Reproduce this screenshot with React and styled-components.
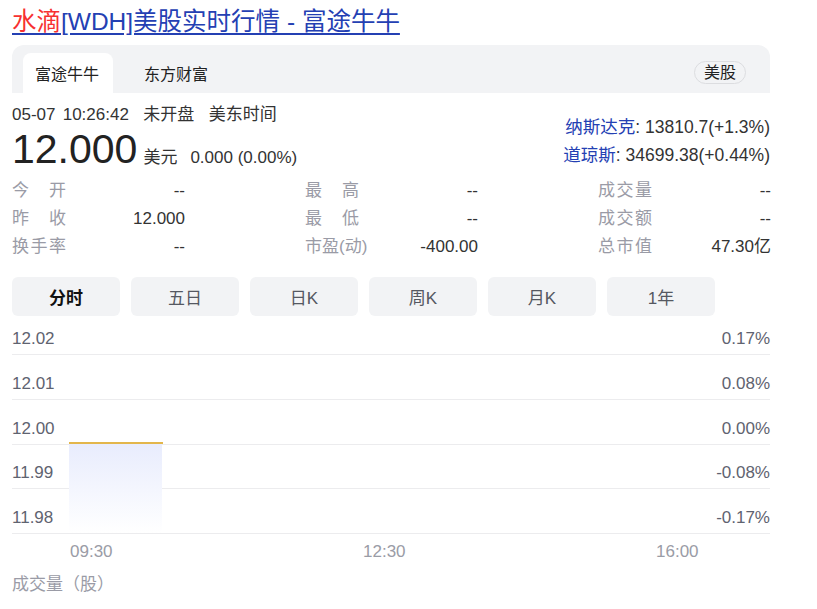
import React from 'react';
import styled, { createGlobalStyle } from 'styled-components';

const GlobalStyle = createGlobalStyle`
  body {
    margin: 0;
    background: #fff;
    font-family: "Liberation Sans", Arial, "Noto Sans CJK SC", sans-serif;
    color: #333;
  }
`;

const Page = styled.div`
  width: 758px;
  padding: 6px 12px 0;
`;

const Title = styled.a`
  display: inline-block;
  font-size: 24.5px;
  line-height: 32px;
  color: #2440b3;
  text-decoration: underline;
  text-underline-offset: 3px;

  & em {
    font-style: normal;
    color: #f73131;
  }
`;

const SourceBar = styled.div`
  margin-top: 7px;
  height: 48px;
  background: #f2f3f5;
  border-radius: 12px 12px 0 0;
  display: flex;
  align-items: flex-end;
  padding: 0 24px 0 11px;
`;

const SourceTab = styled.div`
  height: 40px;
  padding: 0 14px 0 12px;
  margin-right: 19px;
  display: flex;
  align-items: center;
  font-size: 16px;
  color: #222;
  background: ${(p) => (p.$active ? '#fff' : 'transparent')};
  border-radius: 8px 8px 0 0;
`;

const Market = styled.div`
  margin-left: auto;
  align-self: center;
  margin-top: 7px;
  height: 21px;
  line-height: 21px;
  padding: 0 9px;
  border: 1px solid #dcdde0;
  border-radius: 12px;
  font-size: 16px;
  color: #222;
`;

const Header = styled.div`
  display: flex;
  justify-content: space-between;
`;

const Meta = styled.div`
  margin-top: 10px;
  font-size: 17px;
  line-height: 24px;
  color: #333;
  word-spacing: 2.5px;
`;

const PriceRow = styled.div`
  display: flex;
  align-items: baseline;
  height: 44px;
  line-height: 44px;
`;

const Price = styled.span`
  font-size: 41px;
  color: #222;
  margin-right: 6px;
`;

const Change = styled.span`
  font-size: 17px;
  color: #333;
  margin-right: 13px;
`;

const Indexes = styled.div`
  margin-top: 20px;
  text-align: right;
  font-size: 17.5px;
  line-height: 28px;
  color: #333;

  & a {
    color: #2440b3;
    text-decoration: none;
  }
`;

const Stats = styled.div`
  margin-top: 6px;
  display: grid;
  grid-template-columns: repeat(3, 173px);
  column-gap: 120px;
`;

const Stat = styled.div`
  display: flex;
  justify-content: space-between;
  height: 28px;
  line-height: 28px;
  font-size: 17px;
`;

const StatLabel = styled.span`
  width: 54px;
  color: #9a9ba6;
  text-align: justify;
  text-align-last: justify;
  white-space: nowrap;
`;

const StatValue = styled.span`
  color: #333;
`;

const Periods = styled.div`
  margin-top: 16px;
  display: flex;
  gap: 11px;
`;

const Period = styled.div`
  width: 108px;
  height: 39px;
  border-radius: 6px;
  background: #f2f3f5;
  display: flex;
  align-items: center;
  justify-content: center;
  font-size: 17px;
  font-weight: ${(p) => (p.$active ? 700 : 400)};
  color: ${(p) => (p.$active ? '#111' : '#555861')};
`;

const Chart = styled.div`
  position: relative;
`;

const GridRow = styled.div`
  box-sizing: border-box;
  height: ${(p) => p.$h}px;
  border-bottom: 1px solid #ececee;
  display: flex;
  justify-content: space-between;
  align-items: flex-end;
  padding-bottom: 4px;
  font-size: 17px;
  line-height: 22px;
  color: #5f6370;
`;

const PlotLayer = styled.svg`
  position: absolute;
  left: 57px;
  top: 126px;
  pointer-events: none;
`;

const TimeAxis = styled.div`
  display: flex;
  padding-left: 58px;
  height: 36px;
  align-items: center;
  font-size: 17px;
  color: #9a9ca6;
`;

const TimeTick = styled.span`
  flex: 0 0 auto;
  width: 293px;

  &:last-child {
    width: auto;
  }
`;

const VolumeTitle = styled.div`
  font-size: 17px;
  line-height: 30px;
  color: #9a9ba6;
`;

const stats = [
  ['今 开', '--'], ['最 高', '--'], ['成交量', '--'],
  ['昨 收', '12.000'], ['最 低', '--'], ['成交额', '--'],
  ['换手率', '--'], ['市盈(动)', '-400.00'], ['总市值', '47.30亿'],
];

const periods = ['分时', '五日', '日K', '周K', '月K', '1年'];

const grid = [
  ['12.02', '0.17%'],
  ['12.01', '0.08%'],
  ['12.00', '0.00%'],
  ['11.99', '-0.08%'],
  ['11.98', '-0.17%'],
];

const App = () => {
  return (
    <Page>
      <GlobalStyle />
      <Title href="#"><em>水滴</em>[WDH]美股实时行情 - 富途牛牛</Title>

      <SourceBar>
        <SourceTab $active>富途牛牛</SourceTab>
        <SourceTab>东方财富</SourceTab>
        <Market>美股</Market>
      </SourceBar>

      <Header>
        <div>
          <Meta>05-07 10:26:42 &nbsp;未开盘 &nbsp;美东时间</Meta>
          <PriceRow>
            <Price>12.000</Price>
            <Change>美元</Change>
            <Change>0.000 (0.00%)</Change>
          </PriceRow>
        </div>
        <Indexes>
          <div><a href="#">纳斯达克</a>: 13810.7(+1.3%)</div>
          <div><a href="#">道琼斯</a>: 34699.38(+0.44%)</div>
        </Indexes>
      </Header>

      <Stats>
        {stats.map(([label, value]) => (
          <Stat key={label}>
            <StatLabel>{label}</StatLabel>
            <StatValue>{value}</StatValue>
          </Stat>
        ))}
      </Stats>

      <Periods>
        {periods.map((p, i) => (
          <Period key={p} $active={i === 0}>{p}</Period>
        ))}
      </Periods>

      <Chart>
        {grid.map(([left, right], i) => (
          <GridRow key={left} $h={i === 0 ? 39 : 44.75}>
            <span>{left}</span>
            <span>{right}</span>
          </GridRow>
        ))}
        <PlotLayer width="94" height="91" viewBox="0 0 94 91">
          <defs>
            <linearGradient id="fill" x1="0" y1="0" x2="0" y2="1">
              <stop offset="0" stopColor="#e8ecfd" />
              <stop offset="1" stopColor="#ffffff" />
            </linearGradient>
          </defs>
          <rect x="0" y="1" width="93" height="90" fill="url(#fill)" />
          <line x1="0" y1="1" x2="94" y2="1" stroke="#e3b64b" strokeWidth="2" />
        </PlotLayer>
      </Chart>

      <TimeAxis>
        <TimeTick>09:30</TimeTick>
        <TimeTick>12:30</TimeTick>
        <TimeTick>16:00</TimeTick>
      </TimeAxis>
      <VolumeTitle>成交量（股）</VolumeTitle>
    </Page>
  );
};

export default App;
